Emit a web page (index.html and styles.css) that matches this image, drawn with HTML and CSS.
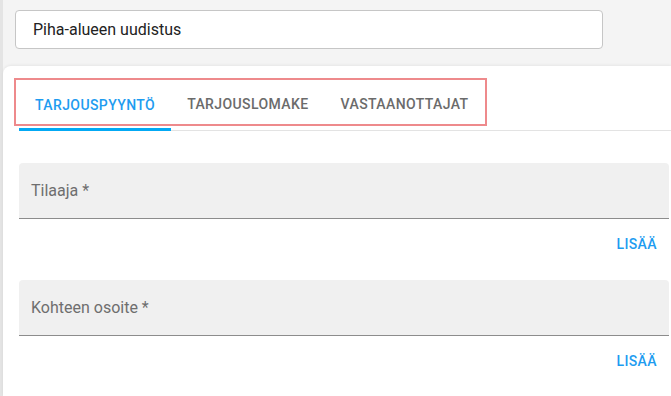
FILE: index.html
```html
<!DOCTYPE html>
<html lang="fi">
<head>
  <meta charset="UTF-8">
  <title>Tarjouspyyntö</title>
  <meta name="viewport" content="width=device-width, initial-scale=1.0">
  <link rel="stylesheet" href="styles.css">
</head>
<body>
  <div class="page">
    <div class="name-row">
      <input class="name-input" type="text" value="Piha-alueen uudistus">
    </div>
    <div class="card">
      <div class="tabs">
        <div class="tab active">Tarjouspyyntö</div>
        <div class="tab">Tarjouslomake</div>
        <div class="tab">Vastaanottajat</div>
        <div class="tabs-mark"></div>
      </div>
      <div class="form">
        <div class="field">
          <label class="field-label">Tilaaja *</label>
        </div>
        <div class="actions">
          <button type="button" class="add-btn">Lisää</button>
        </div>
        <div class="field">
          <label class="field-label">Kohteen osoite *</label>
        </div>
        <div class="actions">
          <button type="button" class="add-btn">Lisää</button>
        </div>
      </div>
    </div>
  </div>
</body>
</html>
```

FILE: styles.css
```css
body {
  margin: 0;
  background: #f4f4f4;
  font-family: 'Roboto', 'Liberation Sans', sans-serif;
  overflow: hidden;
}
.page {
  height: 100vh;
  border-left: 3px solid #e4e4e4;
}
.name-row {
  padding: 10px 0 0 12px;
}
.name-input {
  box-sizing: border-box;
  width: 588px;
  height: 39px;
  border: 1px solid #c6c6c6;
  border-radius: 4px;
  background: #fff;
  padding: 0 10px 0 17px;
  font-family: inherit;
  font-size: 16px;
  color: #222;
  outline: none;
}
.card {
  margin-top: 17px;
  background: #fff;
  border-top-left-radius: 8px;
  box-shadow: 0 -1px 3px rgba(0,0,0,0.06);
  height: 314px;
  padding: 16px 0 0 16px;
}
.tabs {
  position: relative;
  display: flex;
  height: 48px;
  border-bottom: 1px solid #e3e3e3;
}
.tab {
  padding: 0 16px;
  display: flex;
  align-items: center;
  font-size: 14px;
  font-weight: 500;
  letter-spacing: 0.4px;
  text-transform: uppercase;
  color: #6b6b6b;
  margin-top: -4px;
}
.tab.active {
  color: #1e9cf0;
  border-bottom: 3px solid #03a9f4;
  margin-bottom: -1px;
  margin-top: 0;
}
/* merkintä kuvakaappauksesta */
.tabs-mark {
  position: absolute;
  left: -5px;
  top: -4px;
  width: 469px;
  height: 44px;
  border: 2px solid #ee8a8c;
  pointer-events: none;
}
.form {
  padding-top: 32px;
  padding-right: 2px;
}
.field {
  height: 55px;
  background: #f0f0f0;
  border-radius: 4px 4px 0 0;
  border-bottom: 1px solid #8c8c8c;
  display: flex;
  align-items: center;
  padding-left: 12px;
}
.field-label {
  font-size: 16px;
  color: #6e6e6e;
}
.actions {
  display: flex;
  justify-content: flex-end;
  margin: 7px 4px 18px 0;
}
.add-btn {
  height: 36px;
  border: none;
  background: none;
  padding: 0 8px;
  font-family: inherit;
  font-size: 14px;
  font-weight: 500;
  letter-spacing: 0.4px;
  text-transform: uppercase;
  color: #1e9cf0;
  cursor: pointer;
}
```
